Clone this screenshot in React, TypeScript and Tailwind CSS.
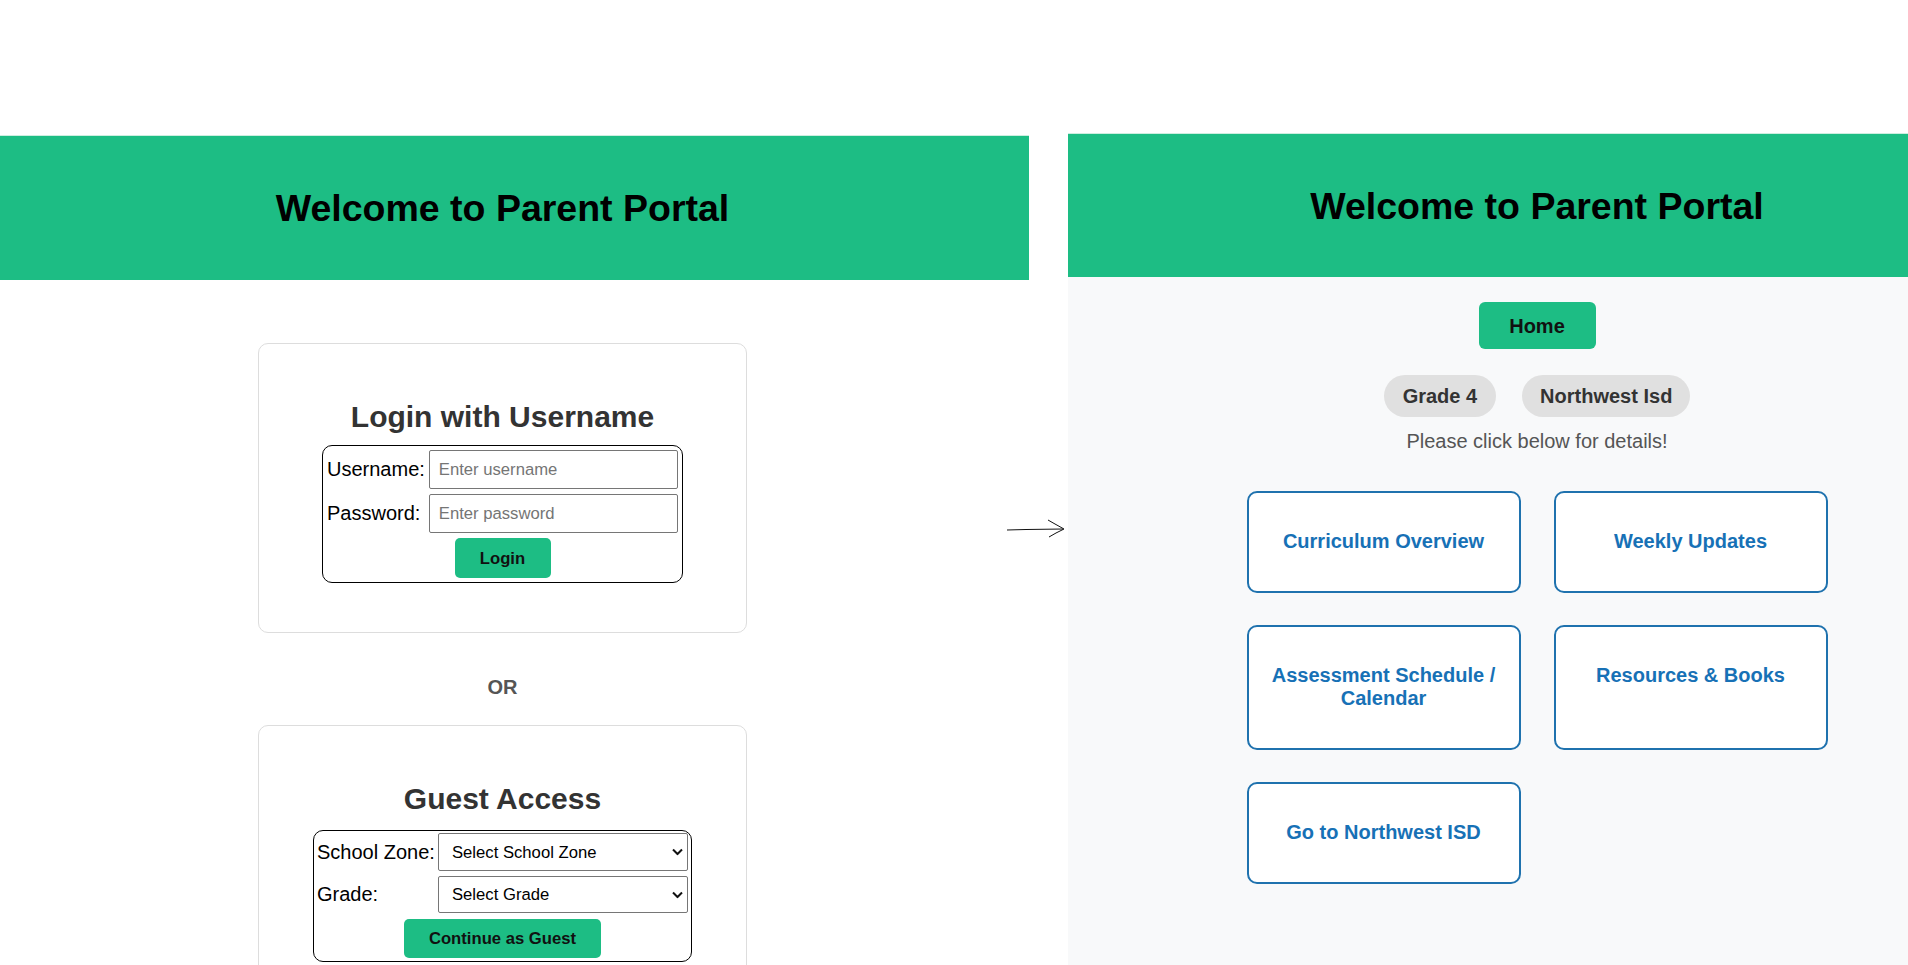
import { type FC } from "react";

const green = "bg-[#1dbd84]";

const cards = [
    { id: 1, label: "Curriculum Overview" },
    { id: 2, label: "Weekly Updates" },
    { id: 3, label: "Assessment Schedule / Calendar" },
    { id: 4, label: "Resources & Books" },
    { id: 5, label: "Go to Northwest ISD" },
];

const Chevron: FC = () => (
    <svg className="absolute right-[5px] top-1/2 -translate-y-1/2 pointer-events-none" width="11" height="7" viewBox="0 0 11 7">
        <path d="M1 1 L5.5 5.5 L10 1" fill="none" stroke="#111" strokeWidth="2" />
    </svg>
);

const LoginPage: FC = () => {
    return (
        <div className="w-[1029px] shrink-0 pt-[135px] flex flex-col bg-white">
            {/* header */}
            <div className={`w-full h-[145px] shrink-0 border-t border-[#cdeee0] ${green} flex items-center`}>
                <h1 className="w-[1005px] text-center text-[37.5px] font-bold leading-[44px] text-black">
                    Welcome to Parent Portal
                </h1>
            </div>

            <div className="w-[1005px] shrink-0 flex flex-col items-center">
                {/* login card */}
                <div className="mt-[63px] shrink-0 w-[489px] h-[290px] border border-[#dddddd] rounded-[10px] flex flex-col items-center pt-[56px]">
                    <h2 className="text-[30px] font-bold leading-[34px] text-[#333]">Login with Username</h2>
                    <div className="mt-[11px] w-[361px] border border-black rounded-[10px] p-[4px] grid grid-cols-[auto_1fr] gap-x-[4px] gap-y-[5px]">
                        <label className="text-[20px] leading-[23px] text-black self-center">Username:</label>
                        <input
                            className="h-[39px] w-full border border-[#767676] rounded-[2px] px-[9px] text-[16.67px] placeholder:text-[#757575] bg-white"
                            placeholder="Enter username"
                        />
                        <label className="text-[20px] leading-[23px] text-black self-center">Password:</label>
                        <input
                            type="password"
                            className="h-[39px] w-full border border-[#767676] rounded-[2px] px-[9px] text-[16.67px] placeholder:text-[#757575] bg-white"
                            placeholder="Enter password"
                        />
                        <div className="col-span-2 flex justify-center">
                            <button className={`h-[40px] w-[96px] rounded-[5px] ${green} text-[16.67px] font-bold text-[#111]`}>
                                Login
                            </button>
                        </div>
                    </div>
                </div>

                <p className="mt-[43px] shrink-0 text-[20px] leading-[23px] font-bold text-[#555]">OR</p>

                {/* guest card */}
                <div className="mt-[26px] shrink-0 w-[489px] h-[300px] border border-[#dddddd] rounded-[10px] flex flex-col items-center pt-[56px]">
                    <h2 className="text-[30px] font-bold leading-[34px] text-[#333]">Guest Access</h2>
                    <div className="mt-[14px] w-[379px] border border-black rounded-[10px] px-[3px] pt-[2px] pb-[3px] grid grid-cols-[auto_250px] justify-between gap-y-[5px]">
                        <label className="text-[20px] leading-[23px] text-black self-center">School Zone:</label>
                        <div className="relative">
                            <select className="appearance-none h-[38px] w-full border border-[#767676] rounded-[2px] pl-[13px] text-[16.67px] text-black bg-white">
                                <option>Select School Zone</option>
                            </select>
                            <Chevron />
                        </div>
                        <label className="text-[20px] leading-[23px] text-black self-center">Grade:</label>
                        <div className="relative">
                            <select className="appearance-none h-[37px] w-full border border-[#767676] rounded-[2px] pl-[13px] text-[16.67px] text-black bg-white">
                                <option>Select Grade</option>
                            </select>
                            <Chevron />
                        </div>
                        <div className="col-span-2 flex justify-center pt-[1px]">
                            <button className={`h-[39px] w-[197px] rounded-[5px] ${green} text-[16.67px] font-bold text-[#111]`}>
                                Continue as Guest
                            </button>
                        </div>
                    </div>
                </div>
            </div>
        </div>
    );
};

const HomePage: FC = () => {
    return (
        <div className="w-[840px] shrink-0 overflow-hidden pt-[133px] flex flex-col">
            <div className="w-[938px] flex-1 flex flex-col">
                <div className={`h-[144px] shrink-0 border-t border-[#cdeee0] ${green} flex items-center justify-center`}>
                    <h1 className="text-[37.5px] font-bold leading-[44px] text-black">Welcome to Parent Portal</h1>
                </div>
                <div className="flex-1 bg-[#f8f9fa] flex flex-col items-center">
                    <button className={`mt-[25px] shrink-0 h-[47px] w-[117px] rounded-[6px] ${green} text-[20px] font-bold text-[#111]`}>
                        Home
                    </button>
                    <div className="mt-[26px] shrink-0 flex gap-[26px]">
                        <span className="h-[42px] px-[19px] rounded-full bg-[#e0e0e0] flex items-center text-[20px] font-bold text-[#333]">
                            Grade 4
                        </span>
                        <span className="h-[42px] px-[18px] rounded-full bg-[#e0e0e0] flex items-center text-[20px] font-bold text-[#333]">
                            Northwest Isd
                        </span>
                    </div>
                    <p className="mt-[13px] shrink-0 text-[20px] leading-[23px] text-[#555]">Please click below for details!</p>
                    <div className="mt-[38px] shrink-0 grid grid-cols-[274px_274px] gap-x-[33px] gap-y-[32px]">
                        {cards.map((card) => (
                            <div
                                key={card.id}
                                className="border-2 border-[#1f72ae] rounded-[10px] bg-white px-[20px] pt-[37px] pb-[38px] text-center text-[20px] leading-[23px] font-bold text-[#1771b6]"
                            >
                                {card.label}
                            </div>
                        ))}
                    </div>
                </div>
            </div>
        </div>
    );
};

export default function App() {
    return (
        <div className="w-[1908px] h-[965px] overflow-hidden bg-white flex font-['Liberation_Sans',Arial,sans-serif]">
            <LoginPage />
            {/* gap with the hand drawn arrow */}
            <div className="w-[39px] shrink-0 relative">
                <svg className="absolute left-[-23px] top-[518px]" width="62" height="22" viewBox="0 0 62 22">
                    <path d="M1 12 L20 11.5 L57 11" fill="none" stroke="#111" strokeWidth="1" />
                    <path d="M42 2 L49 6 L58 11 L50 15 L43 19" fill="none" stroke="#111" strokeWidth="1" />
                </svg>
            </div>
            <HomePage />
        </div>
    );
}
